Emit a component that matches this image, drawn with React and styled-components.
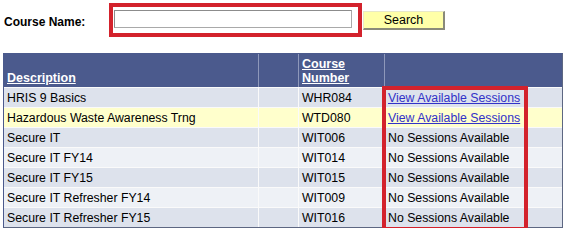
import React from 'react'
import styled, { createGlobalStyle } from 'styled-components'

const GlobalStyle = createGlobalStyle`
  body {
    margin: 0;
    background: #fff;
    font-family: "Liberation Sans", Arial, sans-serif;
    font-size: 12px;
    color: #000;
  }
`

const courses = [
  { name: 'HRIS 9 Basics', code: 'WHR084', open: true },
  { name: 'Hazardous Waste Awareness Trng', code: 'WTD080', open: true, hilite: true },
  { name: 'Secure IT', code: 'WIT006' },
  { name: 'Secure IT FY14', code: 'WIT014' },
  { name: 'Secure IT FY15', code: 'WIT015' },
  { name: 'Secure IT Refresher FY14', code: 'WIT009' },
  { name: 'Secure IT Refresher FY15', code: 'WIT016' },
]

const Page = styled.div`
  padding-top: 3px;
`

const SearchBar = styled.div`
  display: flex;
  align-items: center;
`

const Label = styled.label`
  width: 105px;
  padding-left: 4px;
  padding-top: 4px;
  font-weight: bold;
  font-size: 12px;
`

const Callout = styled.div`
  border: 4px solid #d3222c;
  padding: 3px 6px 5px 1px;
  display: flex;
`

const NameInput = styled.input`
  width: 238px;
  height: 18px;
  box-sizing: border-box;
  border: 1px solid #a9a9a9;
  border-top-color: #8c8c8c;
  border-left-color: #8c8c8c;
  padding: 0 2px;
  font-family: inherit;
  font-size: 12px;
  outline: none;
`

const SearchButton = styled.button`
  margin-left: 1px;
  margin-top: 1px;
  width: 82px;
  height: 19px;
  box-sizing: border-box;
  background: #ffffa8;
  border: 1px solid #e8e8c8;
  border-right: 2px solid #8a8a7a;
  border-bottom: 2px solid #8a8a7a;
  font-family: inherit;
  font-size: 12.5px;
  color: #000;
  padding: 0;
`

const Grid = styled.div`
  position: relative;
  margin: 16px 0 0 3px;
  width: 560px;
`

const Table = styled.table`
  width: 560px;
  border-collapse: separate;
  border-spacing: 0;
  border: 1px solid #4b5a8d;
  border-right-color: #5d6782;
  border-bottom-color: #5d6782;
`

const Head = styled.th`
  background: #4b5a8d;
  color: #fff;
  height: 33px;
  box-sizing: border-box;
  text-align: left;
  vertical-align: bottom;
  padding: 0 2px 2px 3px;
  font-size: 12.5px;
  line-height: 14px;
  font-weight: bold;
  border-right: 1px solid #8e98ba;
  width: ${p => p.$w}px;
  &:last-child { border-right: none; }
  span { text-decoration: underline; }
`

const Cell = styled.td`
  background: ${p => (p.$hilite ? '#ffffcc' : p.$odd ? '#dde2ec' : '#eef1f6')};
  height: 19px;
  padding: 0 2px 0 3px;
  font-size: 12.3px;
  white-space: nowrap;
  border-top: 1px solid #fafafa;
  border-right: 1px solid #fafafa;
  &:last-child { border-right: none; }
`

const SessionLink = styled.a`
  color: #3232c8;
  text-decoration: underline;
`

const Marker = styled.div`
  position: absolute;
  left: 379px;
  top: 33px;
  width: 146px;
  height: 145px;
  box-sizing: border-box;
  border: 4px solid #d3222c;
  pointer-events: none;
`

export default function App() {
  return (
    <Page>
      <GlobalStyle />
      <SearchBar>
        <Label>Course Name:</Label>
        <Callout>
          <NameInput autoFocus />
        </Callout>
        <SearchButton>Search</SearchButton>
      </SearchBar>
      <Grid>
        <Table>
          <thead>
            <tr>
              <Head $w={255}><span>Description</span></Head>
              <Head $w={40}></Head>
              <Head $w={86}><span>Course<br />Number</span></Head>
              <Head></Head>
            </tr>
          </thead>
          <tbody>
            {courses.map((c, i) => (
              <tr key={c.code}>
                <Cell $odd={i % 2 === 0} $hilite={c.hilite}>{c.name}</Cell>
                <Cell $odd={i % 2 === 0} $hilite={c.hilite}></Cell>
                <Cell $odd={i % 2 === 0} $hilite={c.hilite}>{c.code}</Cell>
                <Cell $odd={i % 2 === 0} $hilite={c.hilite}>
                  {c.open ? <SessionLink href="#">View Available Sessions</SessionLink> : 'No Sessions Available'}
                </Cell>
              </tr>
            ))}
          </tbody>
        </Table>
        <Marker />
      </Grid>
    </Page>
  )
}
